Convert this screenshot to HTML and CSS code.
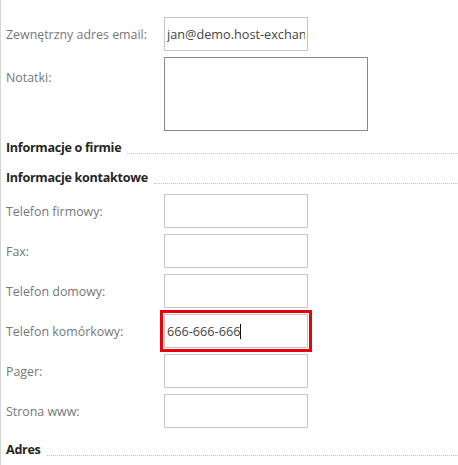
FILE: index.html
```html
<!DOCTYPE html>
<html lang="pl">
<head>
  <meta charset="UTF-8">
  <title>Kontakt</title>
  <link rel="stylesheet" href="styles.css">
</head>
<body>

<div class="panel">
  <div class="row">
    <label for="email">Zewnętrzny adres email:</label>
    <input type="text" id="email" class="field" value="jan@demo.host-exchange.pl">
  </div>
  <div class="row row-notes">
    <label for="notes">Notatki:</label>
    <textarea id="notes" class="notes"></textarea>
  </div>

  <h3 class="section section-first">Informacje o firmie</h3>
  <h3 class="section">Informacje kontaktowe</h3>

  <div class="row">
    <label for="workPhone">Telefon firmowy:</label>
    <input type="text" id="workPhone" class="field">
  </div>
  <div class="row">
    <label for="fax">Fax:</label>
    <input type="text" id="fax" class="field">
  </div>
  <div class="row">
    <label for="homePhone">Telefon domowy:</label>
    <input type="text" id="homePhone" class="field">
  </div>
  <div class="row">
    <label>Telefon komórkowy:</label>
    <div class="field field-active">666-666-666<span class="caret"></span></div>
  </div>
  <div class="row">
    <label for="pager">Pager:</label>
    <input type="text" id="pager" class="field">
  </div>
  <div class="row">
    <label for="www">Strona www:</label>
    <input type="text" id="www" class="field">
  </div>

  <h3 class="section section-last">Adres</h3>
</div>

</body>
</html>
```

FILE: styles.css
```css
body {
  margin: 0;
  font-family: 'Open Sans', 'Noto Sans', sans-serif;
  background: white;
}

.panel {
  display: flex;
  flex-direction: column;
  border-left: 1px solid #d4d4d4;
  padding: 17px 0 0 5px;
  min-height: 465px;
  box-sizing: border-box;
}

.row {
  display: flex;
  align-items: flex-start;
  margin-bottom: 6px;
}

label {
  width: 158px;
  flex-shrink: 0;
  font-size: 12.4px;
  line-height: 35px;
  height: 34px;
  color: #777;
}

.row-notes label {
  padding-top: 3px;
}

.field {
  box-sizing: border-box;
  width: 144px;
  height: 34px;
  margin: 0;
  padding: 0 2px;
  border: 1px solid #c6c6c6;
  font-family: inherit;
  font-size: 12.7px;
  color: #444;
  background: white;
  outline: none;
  overflow: hidden;
  white-space: nowrap;
}

.field-active {
  display: flex;
  align-items: center;
  outline: 3px solid #e8000b;
  outline-offset: 1px;
}

.caret {
  display: inline-block;
  width: 1px;
  height: 15px;
  background: #111;
}

.notes {
  box-sizing: border-box;
  width: 204px;
  height: 74px;
  margin: 0;
  border: 1px solid #8a8a8a;
  resize: none;
}

.section {
  display: flex;
  align-items: flex-end;
  margin: 4px 0 6px;
  font-size: 12.6px;
  letter-spacing: -0.3px;
  line-height: 20px;
  font-weight: bold;
  color: #262626;
}

.section-first {
  margin-top: 1px;
}

.section-last {
  margin-top: 6px;
}

.section::after {
  content: "";
  flex: 1;
  margin: 0 0 4px 6px;
  border-bottom: 1px dotted #c4c4c4;
}
```
